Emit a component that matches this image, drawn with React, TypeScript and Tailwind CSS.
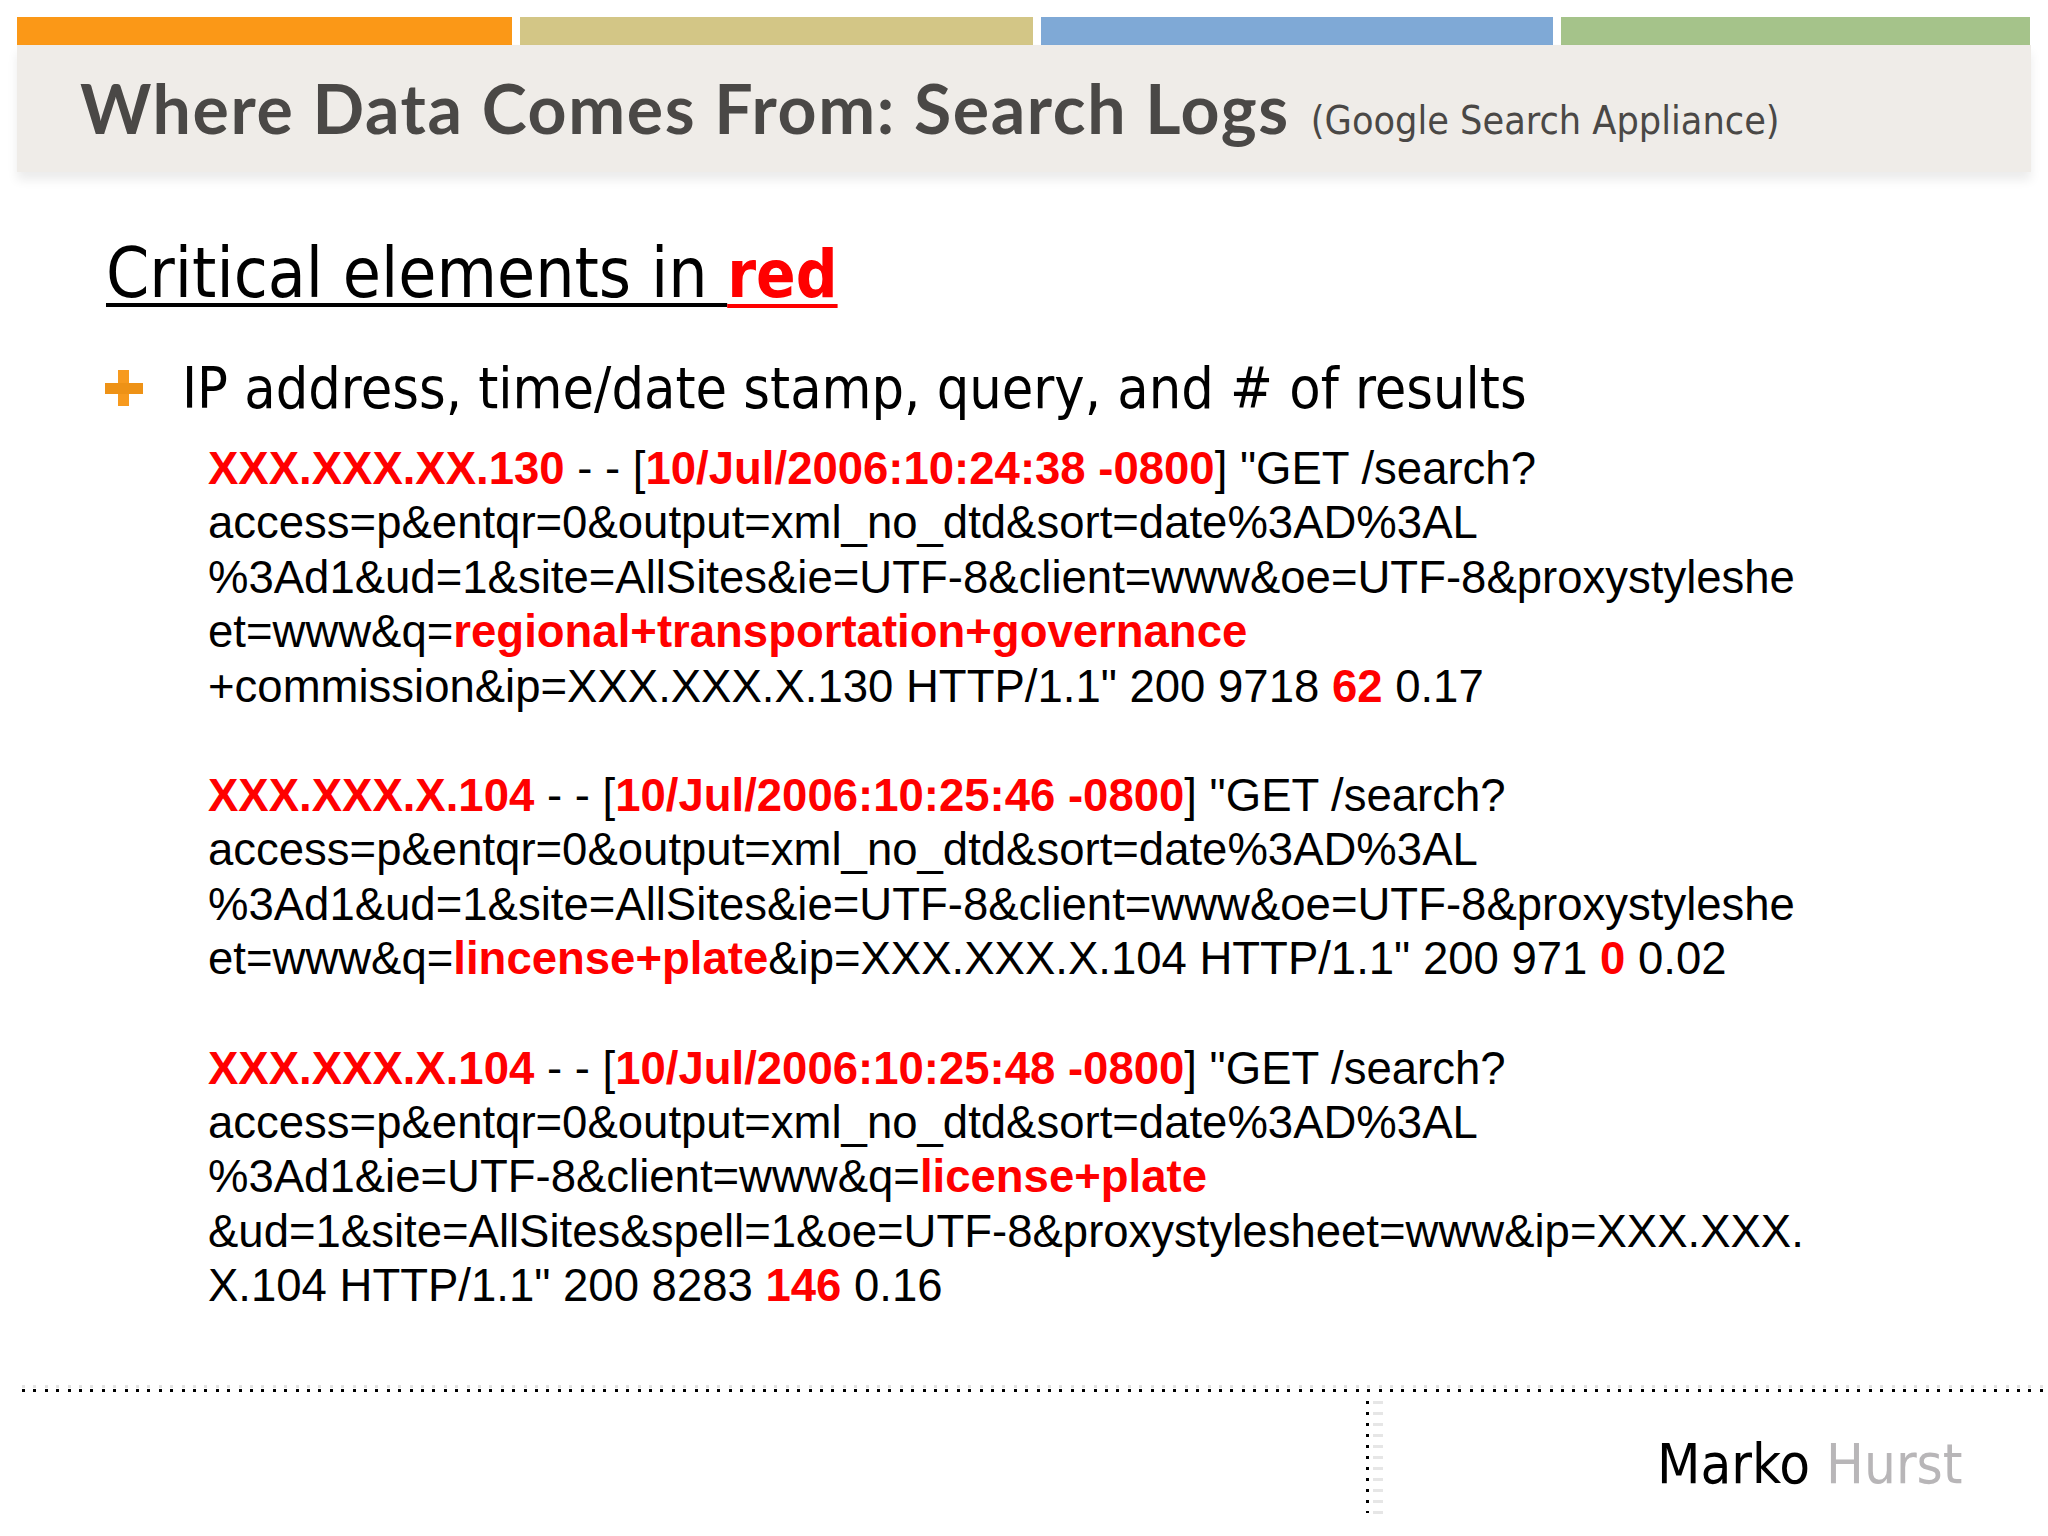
// Slide: search log sample, critical fields highlighted in red

const slideFont = "font-['DejaVu_Sans',sans-serif] [font-stretch:condensed]"

function Red({ children }: { children: React.ReactNode }) {
  return <span className="font-bold text-[#ff0000]">{children}</span>
}

function LogEntry({ lines }: { lines: React.ReactNode[] }) {
  return (
    <div className="mb-[55px]">
      {lines.map((line, i) => (
        <div key={i} className="h-[54.4px] whitespace-nowrap">
          {line}
        </div>
      ))}
    </div>
  )
}

export default function App() {
  return (
    <div className="flex h-[1536px] w-[2048px] flex-col overflow-hidden bg-white text-black">
      {/* Colour bars */}
      <div className="mx-[17px] mt-[17px] flex h-[28px] gap-[8px]">
        <div className="w-[495px] bg-[#fb9817]" />
        <div className="w-[513px] bg-[#d3c686]" />
        <div className="w-[512px] bg-[#7fa9d6]" />
        <div className="w-[469px] bg-[#a5c38a]" />
      </div>

      {/* Title band */}
      <div className="mx-[17px] flex h-[127px] items-baseline bg-[#efece8] pt-[12px] pl-[63px] font-['Lato',sans-serif] text-[#4a4846] shadow-[0_8px_10px_rgba(0,0,0,0.08)]">
        <span className="text-[68px] font-bold tracking-[1.6px]">Where Data Comes From: Search Logs</span>
        <span className={`ml-[21px] text-[39.2px] ${slideFont}`}>(Google Search Appliance)</span>
      </div>

      {/* Heading */}
      <div className={`mt-[61px] ml-[106px] text-[69px] leading-[80px] ${slideFont}`}>
        <span className="underline decoration-[4px] underline-offset-[6px]">Critical elements in </span>
        <span className="text-[65px] font-bold text-[#ff0000] underline decoration-[4px] underline-offset-[7px]">red</span>
      </div>

      {/* Bullet */}
      <div className={`mt-[38px] ml-[105px] flex items-center gap-[39px] text-[57px] leading-[70px] ${slideFont}`}>
        <svg width="38" height="36" viewBox="0 0 38 36" className="shrink-0">
          <rect x="13" y="0" width="11" height="36" fill="#f79a1e" />
          <rect x="0" y="13" width="38" height="11" fill="#ee9216" />
        </svg>
        <span>IP address, time/date stamp, query, and # of results</span>
      </div>

      {/* Log entries */}
      <div className="mt-[19px] ml-[208px] font-['Liberation_Sans',sans-serif] text-[45.5px] leading-[54.4px]">
        <LogEntry
          lines={[
            <><Red>XXX.XXX.XX.130</Red> - - [<Red>10/Jul/2006:10:24:38 -0800</Red>] "GET /search?</>,
            'access=p&entqr=0&output=xml_no_dtd&sort=date%3AD%3AL',
            '%3Ad1&ud=1&site=AllSites&ie=UTF-8&client=www&oe=UTF-8&proxystyleshe',
            <>et=www&q=<Red>regional+transportation+governance</Red></>,
            <>+commission&ip=XXX.XXX.X.130 HTTP/1.1" 200 9718 <Red>62</Red> 0.17</>,
          ]}
        />
        <LogEntry
          lines={[
            <><Red>XXX.XXX.X.104</Red> - - [<Red>10/Jul/2006:10:25:46 -0800</Red>] "GET /search?</>,
            'access=p&entqr=0&output=xml_no_dtd&sort=date%3AD%3AL',
            '%3Ad1&ud=1&site=AllSites&ie=UTF-8&client=www&oe=UTF-8&proxystyleshe',
            <>et=www&q=<Red>lincense+plate</Red>&ip=XXX.XXX.X.104 HTTP/1.1" 200 971 <Red>0</Red> 0.02</>,
          ]}
        />
        <LogEntry
          lines={[
            <><Red>XXX.XXX.X.104</Red> - - [<Red>10/Jul/2006:10:25:48 -0800</Red>] "GET /search?</>,
            'access=p&entqr=0&output=xml_no_dtd&sort=date%3AD%3AL',
            <>%3Ad1&ie=UTF-8&client=www&q=<Red>license+plate</Red></>,
            '&ud=1&site=AllSites&spell=1&oe=UTF-8&proxystylesheet=www&ip=XXX.XXX.',
            <>X.104 HTTP/1.1" 200 8283 <Red>146</Red> 0.16</>,
          ]}
        />
      </div>

      {/* Footer */}
      <div className="mt-auto">
        <div className="ml-[22px] h-[3px] bg-[repeating-linear-gradient(90deg,#e2e2e2_0_3px,transparent_3px_11.4px)]" />
        <div className="mt-[1px] ml-[22px] h-[3px] bg-[repeating-linear-gradient(90deg,#000_0_3px,transparent_3px_11.4px)]" />
        <div className="flex h-[144px]">
          <div className="mt-[9px] ml-[1366px] h-[112px] w-[3px] bg-[repeating-linear-gradient(180deg,#000_0_3px,transparent_3px_11px)]" />
          <div className="mt-[9px] ml-[4px] h-[120px] w-[10px] bg-[repeating-linear-gradient(180deg,#e6e6e6_0_3px,transparent_3px_11px)]" />
          <div className={`mt-[37px] ml-[274px] text-[56px] leading-[70px] ${slideFont}`}>
            Marko <span className="text-[#b8b6b8]">Hurst</span>
          </div>
        </div>
      </div>
    </div>
  )
}
